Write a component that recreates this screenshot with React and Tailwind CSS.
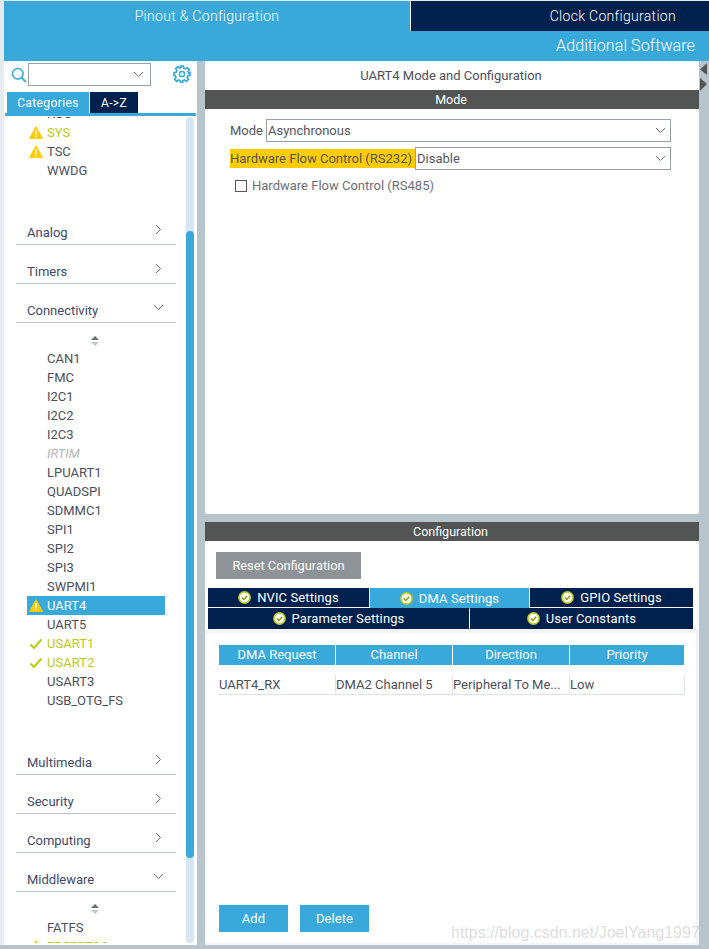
import React from "react";

const F = { fontFamily: '"Roboto", "Liberation Sans", sans-serif' };

function Warn({ className = "" }) {
  return (
    <svg width="14" height="13" viewBox="0 0 14 13" className={className}>
      <path d="M7 .6 13.6 12.4H.4Z" fill="#ffcc00" stroke="#ffcc00" strokeWidth=".8" strokeLinejoin="round" />
      <rect x="6.3" y="4" width="1.4" height="4.8" fill="#fff" />
      <rect x="6.3" y="9.6" width="1.4" height="1.5" fill="#fff" />
    </svg>
  );
}
function Check() {
  return (
    <svg width="14" height="12" viewBox="0 0 14 12">
      <path d="M1.5 6.5 5 10 12.5 1.5" fill="none" stroke="#b8cc1e" strokeWidth="2.2" />
    </svg>
  );
}
function Chev({ dir = "down", color = "#6b7075", size = 10 }) {
  const d = dir === "down" ? "M1 3l4.500 4.500L10 3" : "M3 1l4.500 4.500L3 10";
  return (
    <svg width={size + 1} height={size + 1} viewBox="0 0 11 11">
      <path d={d} fill="none" stroke={color} strokeWidth="1" />
    </svg>
  );
}
function Circle() {
  return (
    <svg width="13" height="13" viewBox="0 0 13 13" className="shrink-0">
      <circle cx="6.5" cy="6.5" r="5.6" fill="#fff" stroke="#bccb1a" strokeWidth="1.6" />
      <path d="M3.8 6.4 5.8 8.4 9.2 4.8" fill="none" stroke="#8a9a12" strokeWidth="1.4" />
    </svg>
  );
}
function Spinner() {
  return (
    <div className="flex justify-center h-[14px] pr-[2px]">
      <svg width="10" height="12" viewBox="0 0 10 12">
        <path d="M5 1 9 5H1Z" fill="#6a6f73" />
        <path d="M5 11 9 7H1Z" fill="#c4c8cb" />
      </svg>
    </div>
  );
}
function Item({ name, state, selected, disabled }) {
  const color = selected ? "text-white" : state === "y" || state === "c" ? "text-[#bccb1a]" : disabled ? "text-[#b4b8bc] italic" : "text-[#4d4f5c]";
  return (
    <div className={`flex items-center h-[19px] w-[138px] ml-[21px] ${selected ? "bg-[#39a9dc]" : ""}`}>
      <div className="w-[20px] pl-[2px] flex items-center shrink-0">
        {(state === "w" || state === "y") && <Warn />}
        {state === "c" && <Check />}
      </div>
      <span className={`text-[13px] leading-[19px] ${color}`}>{name}</span>
    </div>
  );
}
function Cat({ name, open }) {
  return (
    <div className="h-[39px] border-b border-[#b8c4cb] flex items-end justify-between pb-[2px] pl-[11px] pr-[12px]">
      <span className="text-[13px] leading-[19px] text-[#3f4a6b]">{name}</span>
      <span className="mb-[7px]"><Chev dir={open ? "down" : "right"} /></span>
    </div>
  );
}
function Tab({ label, active, className = "" }) {
  return (
    <div className={`flex items-center justify-center gap-[6px] text-white text-[13px] tracking-[0.1px] ${active ? "bg-[#39a9dc]" : "bg-[#00204e]"} ${className}`}>
      <Circle />
      <span>{label}</span>
    </div>
  );
}
function Select({ value, className = "" }) {
  return (
    <div className={`h-[23px] border border-[#9a9fa3] bg-white flex items-center justify-between pl-[1px] pr-[4px] ${className}`}>
      <span className="text-[13px] text-[#55565f]">{value}</span>
      <Chev />
    </div>
  );
}

export default function App() {
  const conn = [["CAN1"],["FMC"],["I2C1"],["I2C2"],["I2C3"],["IRTIM",null,false,true],["LPUART1"],["QUADSPI"],["SDMMC1"],["SPI1"],["SPI2"],["SPI3"],["SWPMI1"],["UART4","w",true],["UART5"],["USART1","c"],["USART2","c"],["USART3"],["USB_OTG_FS"]];
  return (
    <div style={F} className="w-[709px] h-[949px] overflow-hidden bg-[#e6ebef] flex flex-col pt-[1px] pl-[4px]">
      <div className="bg-[#39a9dc] h-[60px] shrink-0 flex flex-col">
        <div className="flex h-[30px]">
          <div className="w-[406px] flex items-center justify-center text-white text-[14px] font-light tracking-[0.3px]">Pinout &amp; Configuration</div>
          <div className="w-px bg-white" />
          <div className="flex-1 bg-[#00204e] flex items-center justify-end pr-[33px] text-white text-[14px] font-light tracking-[0.3px]">Clock Configuration</div>
        </div>
        <div className="h-[30px] flex items-center justify-end pr-[14px] text-white text-[16px] font-light tracking-[0.1px]">Additional Software</div>
      </div>

      <div className="flex h-[884px] shrink-0">
        {/* left */}
        <div className="w-[193px] shrink-0 bg-white flex flex-col pl-[1px]">
          <div className="h-[31px] shrink-0 flex items-start pt-[2px] pl-[6px]">
            <svg width="16" height="16" viewBox="0 0 16 16" className="mt-[4px]">
              <circle cx="6.8" cy="6.8" r="5.3" fill="none" stroke="#39a9dc" strokeWidth="1.6" />
              <path d="M10.6 10.6 15 15" stroke="#39a9dc" strokeWidth="1.8" />
            </svg>
            <div className="w-[123px] h-[23px] border border-[#9a9fa3] ml-[1px] flex items-center justify-end pr-[6px]"><Chev /></div>
            <svg width="18" height="18" viewBox="0 0 18 18" className="ml-[22px] mt-[2px]">
              <g fill="none" stroke="#39a9dc">
                <circle cx="9" cy="9" r="2.6" strokeWidth="1.5" />
                <path strokeWidth="1.7" d="M7.6 1h2.8l.4 2.2 1.6.7 1.9-1.3 2 2-1.3 1.9.7 1.6L17 7.6v2.8l-2.2.4-.7 1.6 1.3 1.9-2 2-1.9-1.3-1.6.7-.4 2.2H7.6l-.4-2.2-1.6-.7-1.9 1.3-2-2 1.3-1.900-.7-1.6L1 10.4V7.6l2.2-.4.7-1.600L2.600 3.700l2-2 1.900 1.300 1.600-.7Z" />
              </g>
            </svg>
          </div>
          <div className="flex h-[21px] shrink-0 pl-[2px] gap-px">
            <div className="w-[82px] bg-[#39a9dc] text-white text-[12px] tracking-[0.4px] flex items-center justify-center">Categories</div>
            <div className="w-[48px] bg-[#00204e] text-white text-[12px] tracking-[0.3px] flex items-center justify-center">A-&gt;Z</div>
          </div>
          <div className="h-[3px] bg-[#39a9dc] shrink-0 mr-[1px]" />
          <div className="flex-1 min-h-0 flex pl-[1px] pr-[3px] pt-[1px]">
            <div className="w-[180px] overflow-hidden shrink-0 h-[826px]">
              <div className="-mt-[13px]">
                <Item name="RCC" />
                <Item name="SYS" state="y" />
                <Item name="TSC" state="w" />
                <Item name="WWDG" />
              </div>
              <div className="h-[26px]" />
              <div className="w-[160px] ml-[10px]">
                <Cat name="Analog" />
                <Cat name="Timers" />
                <Cat name="Connectivity" open />
              </div>
              <div className="pt-[12px]"><div className="w-[160px] ml-[10px]"><Spinner /></div></div>
              <div>
                {conn.map(([n, s, sel, dis]) => <Item key={n} name={n} state={s} selected={sel} disabled={dis} />)}
              </div>
              <div className="h-[26px]" />
              <div className="w-[160px] ml-[10px]">
                <Cat name="Multimedia" />
                <Cat name="Security" />
                <Cat name="Computing" />
                <Cat name="Middleware" open />
              </div>
              <div className="pt-[11px]"><div className="w-[160px] ml-[10px]"><Spinner /></div></div>
              <div className="pt-px">
                <Item name="FATFS" />
                <Item name="FREERTOS" state="y" />
              </div>
            </div>
            <div className="w-[8px] h-[826px] bg-[#d6e6f3] rounded-[4px] overflow-hidden">
              <div className="mt-[114px] h-[627px] bg-[#39a9dc] rounded-[4px]" />
            </div>
          </div>
        </div>

        <div className="w-[8px] shrink-0 bg-[#b8c4cb]" />

        {/* right */}
        <div className="w-[494px] shrink-0 flex flex-col">
          <div className="h-[453px] bg-white flex flex-col shrink-0">
            <div className="h-[29px] flex items-center justify-center text-[13px] text-[#4d4f5c] pr-[2px]">UART4 Mode and Configuration</div>
            <div className="h-[19px] bg-[#535554] text-white text-[12.5px] flex items-center justify-center pr-[2px] pt-px">Mode</div>
            <div className="pl-[25px] pt-[10px] flex flex-col">
              <div className="flex items-center h-[23px]">
                <span className="text-[13px] text-[#55565f] w-[37px]">Mode</span>
                <Select value="Asynchronous" className="w-[405px] -ml-px" />
              </div>
              <div className="flex items-center h-[23px] mt-[5px]">
                <span className="text-[13px] text-[#55565f] bg-[#ffcc00] w-[185px] h-[19px] leading-[19px] whitespace-nowrap">Hardware Flow Control (RS232)</span>
                <Select value="Disable" className="w-[256px]" />
              </div>
              <div className="flex items-center h-[19px] mt-[6px] pl-[5px]">
                <div className="w-[12px] h-[12px] border border-[#55565f]" />
                <span className="ml-[5px] text-[13px] text-[#6d6f78]">Hardware Flow Control (RS485)</span>
              </div>
            </div>
          </div>
          <div className="h-[8px] bg-[#b8c4cb] shrink-0" />
          <div className="flex-1 bg-white flex flex-col">
            <div className="h-[19px] bg-[#535554] text-white text-[12.5px] flex items-center justify-center shrink-0 pr-[3px] pt-px">Configuration</div>
            <div className="pl-[11px] pt-[11px] shrink-0">
              <div className="w-[145px] h-[27px] bg-[#8e9398] text-white text-[12.8px] flex items-center justify-center">Reset Configuration</div>
            </div>
            <div className="pl-[3px] pr-[6px] pt-[9px] shrink-0 flex flex-col">
              <div className="flex h-[20px] gap-px">
                <Tab label="NVIC Settings" className="w-[161px] h-[19px]" />
                <Tab label="DMA Settings" active className="w-[159px] h-[21px]" />
                <Tab label="GPIO Settings" className="flex-1 h-[19px]" />
              </div>
              <div className="flex h-[21px] gap-px">
                <Tab label="Parameter Settings" className="w-[261px]" />
                <Tab label="User Constants" className="flex-1" />
              </div>
            </div>
            <div className="flex-1 flex flex-col bg-[#f2f4f6] pt-[4px] pl-[2px] pr-[3px] pb-[2px] min-h-0">
              <div className="flex-1 bg-white flex flex-col pl-[12px] pr-[11px] pt-[12px] pb-[11px]">
                <div className="grid grid-cols-[116px_116px_116px_114px] gap-px h-[19px]">
                  {["DMA Request","Channel","Direction","Priority"].map(h => (
                    <div key={h} className="bg-[#39a9dc] text-white text-[13px] flex items-center justify-center">{h}</div>
                  ))}
                </div>
                <div className="grid grid-cols-[117px_117px_117px_116px] h-[20px] mt-[11px] border-b border-[#dfe3e6] -ml-px w-[467px]">
                  {["UART4_RX","DMA2 Channel 5","Peripheral To Me...","Low"].map((c, i) => (
                    <div key={c} className={`text-[13px] text-[#4d4f5c] leading-[19px] whitespace-nowrap overflow-hidden border-[#dfe3e6] ${i > 0 ? "border-l" : "pl-px"} ${i === 3 ? "border-r" : ""}`}>{c}</div>
                  ))}
                </div>
                <div className="flex-1" />
                <div className="flex gap-[12px]">
                  <div className="w-[69px] h-[27px] bg-[#39a9dc] text-white text-[13px] tracking-[0.1px] flex items-center justify-center">Add</div>
                  <div className="w-[69px] h-[27px] bg-[#39a9dc] text-white text-[13px] tracking-[0.1px] flex items-center justify-center">Delete</div>
                </div>
              </div>
            </div>
          </div>
        </div>

        <div className="flex-1 bg-[#b8c4cb] relative">
          <svg width="10" height="30" viewBox="0 0 10 30" className="absolute left-0 top-0">
            <path d="M8 2 1 8.500 8 14Z" fill="#535554" />
            <path d="M1 17 8 23 1 30Z" fill="#535554" />
          </svg>
        </div>
      </div>
      <div className="h-[4px] bg-[#b8c4cb] -ml-[4px] shrink-0" />
      <div className="absolute left-[451px] top-[921px] text-[16px] text-[#dedede] whitespace-nowrap" style={{ fontFamily: '"Liberation Sans", sans-serif' }}>https://blog.csdn.net/JoelYang1997</div>
    </div>
  );
}
